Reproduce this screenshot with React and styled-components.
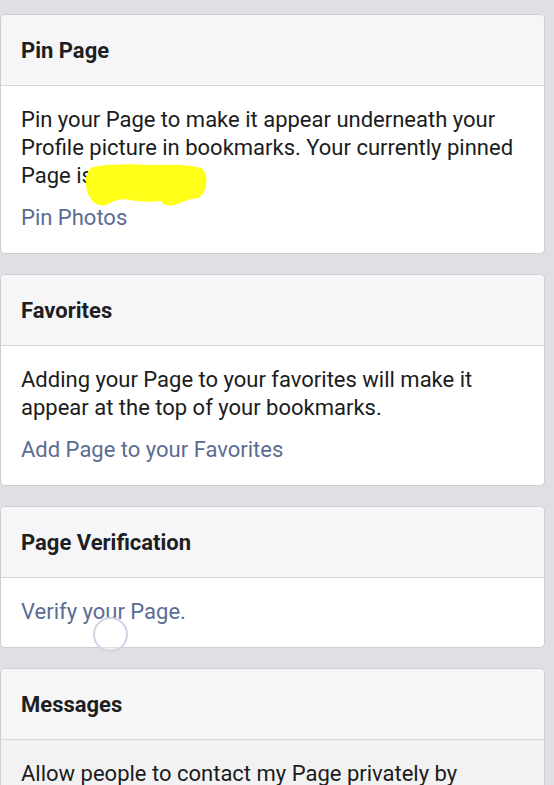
import styled, { createGlobalStyle } from 'styled-components';

const GlobalStyle = createGlobalStyle`
  body {
    margin: 0;
    background: #dfe0e3;
    font-family: Roboto, "Liberation Sans", sans-serif;
    -webkit-font-smoothing: antialiased;
  }
`;

const Page = styled.div`
  display: flex;
  flex-direction: column;
  gap: 20px;
  padding: 14px 9px 40px 0;
  position: relative;
`;

const Card = styled.section`
  background: ${({ $pressed }) => ($pressed ? '#f2f2f3' : '#ffffff')};
  border: 1px solid #cdced2;
  border-radius: 5px;
  overflow: hidden;
`;

const Header = styled.h2`
  margin: 0;
  background: #f6f6f9;
  border-bottom: 1px solid #d6d7db;
  padding: 23px 20px 22px;
  font-size: 22px;
  line-height: 25px;
  font-weight: 700;
  color: #1d1e22;
`;

const Body = styled.div`
  padding: 20px 20px 21px;
  display: flex;
  flex-direction: column;
  gap: 14px;
`;

const Text = styled.p`
  margin: 0;
  font-size: 22px;
  line-height: 28px;
  color: #1b1c20;
`;

const LinkText = styled.a`
  font-size: 22px;
  line-height: 28px;
  color: #5b6c93;
  text-decoration: none;
`;

const Hidden = styled.span`
  position: relative;
`;

const Scribble = styled.svg`
  position: absolute;
  left: 1px;
  top: 0;
  width: 126px;
  height: 44px;
`;

const Touch = styled.div`
  position: absolute;
  left: 93px;
  top: 617px;
  width: 35px;
  height: 35px;
  border-radius: 50%;
  border: 2px solid #d3d2e4;
  box-sizing: border-box;
  background: rgba(255, 255, 255, 0.35);
`;

export default function App() {
  return (
    <>
      <GlobalStyle />
      <Page>
        <Card>
          <Header>Pin Page</Header>
          <Body>
            <Text>
              Pin your Page to make it appear underneath your Profile picture in bookmarks. Your currently pinned Page i
              <Hidden>
                s
                <Scribble viewBox="0 0 126 44">
                  <path
                    d="M10 4 Q30 0 70 2 Q110 1 120 6 Q126 14 122 26 Q120 36 108 36 Q96 40 92 42 Q82 44 78 38 Q60 40 40 36 Q28 38 24 42 Q12 44 8 36 Q2 28 3 16 Q4 6 10 4 Z"
                    fill="#ffff1a"
                  />
                </Scribble>
              </Hidden>
            </Text>
            <LinkText>Pin Photos</LinkText>
          </Body>
        </Card>

        <Card>
          <Header>Favorites</Header>
          <Body>
            <Text>Adding your Page to your favorites will make it appear at the top of your bookmarks.</Text>
            <LinkText>Add Page to your Favorites</LinkText>
          </Body>
        </Card>

        <Card>
          <Header>Page Verification</Header>
          <Body>
            <LinkText>Verify your Page.</LinkText>
          </Body>
        </Card>

        <Card $pressed>
          <Header>Messages</Header>
          <Body>
            <Text>Allow people to contact my Page privately by showing the Message button.</Text>
          </Body>
        </Card>
        <Touch />
      </Page>
    </>
  );
}
